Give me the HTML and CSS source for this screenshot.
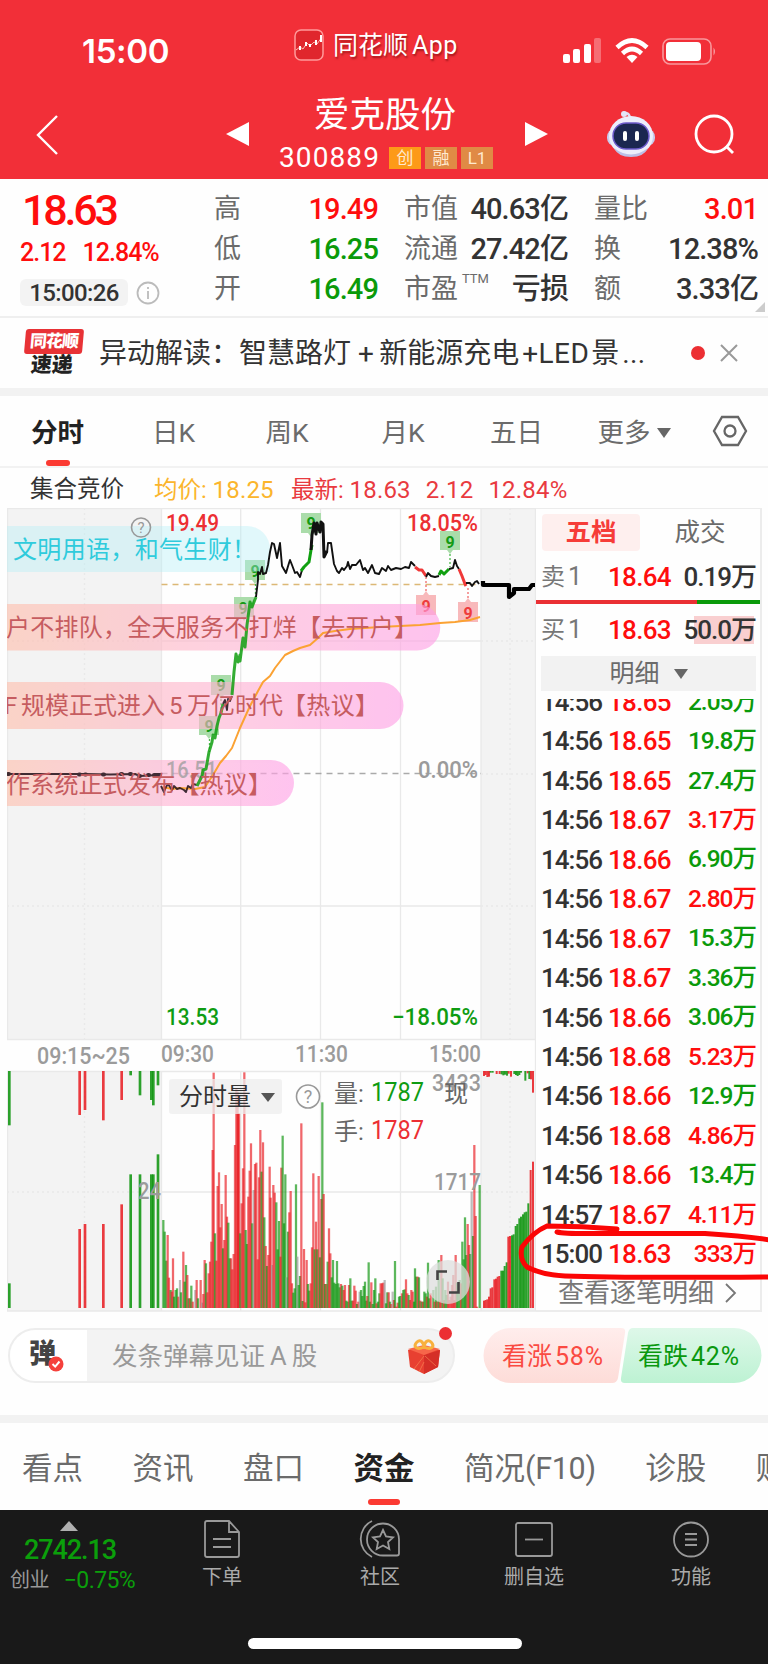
FILE: index.html
```
<!DOCTYPE html>
<html lang="zh-CN">
<head>
  <meta charset="UTF-8">
  <meta name="viewport" content="width=device-width, initial-scale=1.0">
  <title>爱克股份 300889</title>
  <link rel="stylesheet" href="styles.css">
</head>
<body>

<header class="header">
  <div class="status-bar">
    <span class="clock">15:00</span>
    <div class="app-name">
      <svg width="30" height="32" viewBox="0 0 30 32">
        <rect x="1" y="1" width="28" height="30" rx="6" fill="#e0262d" stroke="#ff9a9a" stroke-width="1.5"/>
        <path d="M2 21L6 18L9 20L13 14L16 17L20 13L23 15L28 8" fill="none" stroke="#ffb9b0" stroke-width="1"/>
        <path d="M6 17v4M12 13v4M16 15v3M22 11v5M27 6v7" stroke="#fff" stroke-width="2"/>
      </svg>
      <span>同花顺<span class="latin">App</span></span>
    </div>
    <div class="status-icons">
      <svg width="40" height="26" viewBox="0 0 40 26" fill="#fff">
        <rect x="1" y="16" width="7" height="9" rx="2"/>
        <rect x="11" y="11" width="7" height="14" rx="2"/>
        <rect x="22" y="6" width="7" height="19" rx="2"/>
        <rect x="32" y="0" width="7" height="25" rx="2" opacity=".3"/>
      </svg>
      <svg width="34" height="26" viewBox="0 0 34 26" fill="none" stroke="#fff" stroke-width="4.6">
        <path d="M2 9.500Q17 -4.500 32 9.500"/>
        <path d="M7.500 15.500Q17 6.500 26.500 15.500"/>
        <path d="M17 25L11.500 19Q17 14.500 22.500 19Z" fill="#fff" stroke="none"/>
      </svg>
      <svg width="55" height="27" viewBox="0 0 55 27">
        <rect x="1" y="1" width="48" height="25" rx="7" fill="none" stroke="#fff" stroke-opacity=".5" stroke-width="1.600"/>
        <rect x="4" y="4" width="35" height="19" rx="4" fill="#fff"/>
        <path d="M51.500 9.500q3 4 0 8z" fill="#fff" opacity=".5"/>
      </svg>
    </div>
  </div>
  <div class="nav">
    <svg class="nav-back" width="24" height="42" viewBox="0 0 24 42"><path d="M22 2L3 21L22 40" fill="none" stroke="#fff" stroke-width="2.400"/></svg>
    <svg class="nav-prev" width="24" height="26" viewBox="0 0 24 26"><path d="M23 1V25L0 13Z" fill="#fff"/></svg>
    <div class="stock">
      <h1>爱克股份</h1>
      <div class="code"><span>300889</span><i class="tag hot">创</i><i class="tag">融</i><i class="tag">L1</i></div>
    </div>
    <svg class="nav-next" width="24" height="26" viewBox="0 0 24 26"><path d="M1 1V25L24 13Z" fill="#fff"/></svg>
    <svg class="nav-bot" width="50" height="46" viewBox="0 0 50 46">
      <path d="M24 7Q23 1 17 2" fill="none" stroke="#dfe0f5" stroke-width="2.500"/>
      <circle cx="18" cy="3" r="3" fill="#e4e6f8"/>
      <rect x="1" y="18" width="48" height="17" rx="8" fill="#c9cbec"/>
      <ellipse cx="25" cy="25" rx="22" ry="20" fill="#eceefb"/>
      <path d="M8 37q17 13 34 0q-4 9-17 9t-17-9" fill="#bcbfe6"/>
      <rect x="7" y="12" width="36" height="26" rx="13" fill="#1b2750" stroke="#6b59c9" stroke-width="1.500"/>
      <rect x="17" y="20" width="4" height="10" rx="2" fill="#fff"/>
      <rect x="29" y="20" width="4" height="10" rx="2" fill="#fff"/>
    </svg>
    <svg class="nav-search" width="42" height="42" viewBox="0 0 42 42" fill="none" stroke="#fff" stroke-width="2.800"><circle cx="20" cy="20" r="18"/><path d="M32 32L39 39"/></svg>
  </div>
</header>

<section class="quote">
  <div class="quote-main">
    <div class="price">18.63</div>
    <div class="change"><span>2.12</span><span>12.84%</span></div>
    <div class="time-row">
      <span class="time-pill">15:00:26</span>
      <svg width="24" height="24" viewBox="0 0 24 24" fill="none" stroke="#bbb" stroke-width="1.800"><circle cx="12" cy="12" r="10.500"/><path d="M12 10v8M12 6v2"/></svg>
    </div>
  </div>
  <dl class="stats s1">
    <dt>高</dt><dd class="up">19.49</dd>
    <dt>低</dt><dd class="down">16.25</dd>
    <dt>开</dt><dd class="down">16.49</dd>
  </dl>
  <dl class="stats s2">
    <dt>市值</dt><dd>40.63亿</dd>
    <dt>流通</dt><dd>27.42亿</dd>
    <dt>市盈<sup>TTM</sup></dt><dd>亏损</dd>
  </dl>
  <dl class="stats s3">
    <dt>量比</dt><dd class="up">3.01</dd>
    <dt>换</dt><dd>12.38%</dd>
    <dt>额</dt><dd>3.33亿</dd>
  </dl>
  <span class="corner"></span>
</section>

<section class="news">
  <div class="news-logo"><b>同花顺</b><em>速递</em></div>
  <p>异动解读：智慧路灯<span class="plus">+</span>新能源充电<span>+LED</span>景<span>...</span></p>
  <span class="dot"></span>
  <svg width="18" height="18" viewBox="0 0 18 18"><path d="M1 1L17 17M17 1L1 17" stroke="#999" stroke-width="2"/></svg>
</section>

<nav class="tabs">
  <span class="active">分时</span>
  <span>日K</span>
  <span>周K</span>
  <span>月K</span>
  <span>五日</span>
  <span>更多<i class="caret"></i></span>
  <svg width="36" height="32" viewBox="0 0 36 32" fill="none" stroke="#666" stroke-width="2.300"><path d="M10 2H26L34 16L26 30H10L2 16Z"/><circle cx="18" cy="16" r="5.500"/></svg>
</nav>

<div class="legend">
  <span class="l-name">集合竞价</span>
  <span class="l-avg">均价: <b>18.25</b></span>
  <span class="l-new">最新: <b>18.63</b></span>
  <span class="l-new"><b>2.12</b></span>
  <span class="l-new"><b>12.84%</b></span>
</div>

<main class="board">
  <svg class="chart" width="529" height="804" viewBox="7 508 529 804">
    <defs>
      <linearGradient id="pink" x1="0" x2="1"><stop offset="0" stop-color="#ffc0ad"/><stop offset=".5" stop-color="#ffb5d0"/><stop offset="1" stop-color="#ff9fe6"/></linearGradient>
    </defs>

    <!-- auction zones and grid -->
    <path d="M7 508H161.500V1039H7ZM481 508H535.500V1039H481ZM7 1071H161.500V1311H7ZM481 1071H535.500V1311H481Z" fill="#f3f3f3"/>
    <path class="grid" d="M7 508.500H536M7 1039.500H536M7 1071.500H536M7 1311H536M161.500 641H481M161.500 906H481M161.500 1192H481M7.500 508V1039M161.500 508V1039M240.700 508V1039M320.500 508V1039M400.500 508V1039M481 508V1039M535.500 508V1311M7.500 1071V1311M161.500 1071V1311M240.700 1071V1311M320.500 1071V1311M400.500 1071V1311M481 1071V1311"/>
    <path class="grid dotted" d="M84.500 508V1039M510 508V1039M84.500 1071V1311M510 1071V1311M7 641H161M7 1192H161M481 641H535M481 774H535M481 1192H535M7 906H161M481 906H535"/>
    <path d="M161.500 584.500H478" stroke="#dcb876" stroke-width="1.300" stroke-dasharray="6 5"/>
    <path d="M161.500 773.500H481" stroke="#aaa" stroke-width="1.300" stroke-dasharray="6 5"/>

    <!-- nine-turn flags -->
    <g class="flag-buy">
      <path d="M245 560h20v20h-7l-3 4l-3-4h-7ZM234 597h20v20h-7l-3 4l-3-4h-7ZM211 675h20v20h-7l-3 4l-3-4h-7ZM199 716h20v19h-7l-3 4l-3-4h-7ZM301 513h20v20h-7l-3 4l-3-4h-7ZM440 531h20v19h-7l-3 4l-3-4h-7Z"/>
      <text x="255" y="577">9</text><text x="243" y="614">9</text><text x="221" y="691">9</text><text x="209" y="732">9</text><text x="311" y="529">9</text><text x="450" y="548">9</text>
    </g>
    <g class="flag-sell">
      <path d="M416 595h7l3-4l3 4h7v20h-20ZM458 602h7l3-4l3 4h7v20h-20Z"/>
      <text x="426" y="612">9</text><text x="468" y="619">9</text>
    </g>
    <path d="M255.500 584V597M221 699V712M209.500 739V752M450 554V567" class="stem green-line"/>
    <path d="M426 577V592M468 588V599" class="stem red-line"/>

    <!-- bullet comment bubbles -->
    <path d="M7 526H247A23 23 0 0 1 270 549V572H7Z" fill="#b4eef6" opacity=".38"/>
    <g fill="url(#pink)" opacity=".62">
      <path d="M7 604H417A23 23 0 0 1 417 650.500H7Z"/>
      <path d="M7 682H380A23 23 0 0 1 380 729H7Z"/>
      <path d="M7 760H271A23 23 0 0 1 271 806H7Z"/>
    </g>

    <text class="num gray base" x="166" y="778" textLength="51" lengthAdjust="spacingAndGlyphs">16.51</text>
    <text class="num gray" x="418" y="778" textLength="60" lengthAdjust="spacingAndGlyphs">0.00%</text>
    <text class="num red" x="166" y="531" textLength="53" lengthAdjust="spacingAndGlyphs">19.49</text>
    <text class="num red" x="407" y="531" textLength="71" lengthAdjust="spacingAndGlyphs">18.05%</text>
    <text class="num green" x="166" y="1025" textLength="53" lengthAdjust="spacingAndGlyphs">13.53</text>
    <text class="num green" x="392" y="1025" textLength="86" lengthAdjust="spacingAndGlyphs">−18.05%</text>

    <!-- average -->
    <path class="line avg" d="M163 787L172 789L180 788L195 789L205 787L213 775L220 763L226 756L232 748L240 728L250 706L258 691L263 682L270 676L275 668L285 655L293 651L300 648L310 645L318 638L323 633L335 631L350 629L380 627L420 625L440 623L455 622L470 620L480 617"/>

    <!-- price -->
    <g opacity=".85">
      <path class="line" stroke="#201018" d="M7 774H84L110 774.500L135 774L140 776L158 775L161 774"/>
      <path class="beads" d="M8 774h1M79 774.500h1M85 774.500h1M103 774.500h1M121 774h1M130 774h1M139 776h1M148 775h1M154 775h6"/>
      <path class="line" stroke="#201018" d="M161 786L164 792L166 787L168 784L172 790L174 786L177 789L180 788L184 790L186 792L188 786L191 788L193 784L197 785"/>
      <path class="line bold" stroke="#10a010" d="M197 786L200 780L202 776L203 770L206 769L209 752L212 742L213 735L215 738L217 726L219 718L221 713L223 704"/>
      <path class="line" stroke="#201018" d="M223 704L225 700L227 710L228 699L230 701L232 696"/>
      <path class="line bold" stroke="#10a010" d="M232 695L234 672L236 654L238 662L240 655L240 661L243 638L245 647L247 625L249 610L250 602L252 607L256 597"/>
    </g>
    <path class="line" stroke="#111" d="M256 597L258 580L258 572L260 574L262 567L263 574L266 573L268 565L270 552L272 543L274 544L277 558L280 543L282 566L286 573L289 563L290 560L292 565L295 573L297 572L300 577L302 570"/>
    <path class="line bold" stroke="#10a010" d="M301 571L304 567L307 564L309 562L311 550L312 545"/>
    <path class="line bold" stroke="#111" d="M311 550L312 535L314 523L316 534L317 523L320 532L321 522L323 524L324 557L327 551"/>
    <path class="line" stroke="#111" d="M327 553L328 543L331 543L333 557L334 564L337 571L339 573L342 568L344 570L347 566L348 562L350 569L352 565L356 565L360 560L363 570L365 568L368 573L372 565L375 573L379 574L382 568L386 571L388 566L391 570L396 568L401 569L405 567L409 568L411 562L415 566"/>
    <path class="line bold" stroke="#f03838" d="M415 567L419 570L422 570L426 576"/>
    <path class="line" stroke="#111" d="M426 577L428 573L431 576L435 577L439 576"/>
    <path class="line bold" stroke="#10a010" d="M439 575L441 571L444 574L449 569"/>
    <path class="line" stroke="#111" d="M449 569L453 568L455 560L457 566L459 569"/>
    <path class="line bold" stroke="#f03838" d="M459 569L462 576L465 584L466 586"/>
    <path class="line" stroke="#111" d="M466 583L470 583L472 586L475 582L477 581L479 584"/>
    <path class="close-line" d="M483 581V585H509V597L514 593V589H529L532 585H535"/>

    <!-- bullet comment text -->
    <text class="cn" x="13" y="558" fill="#2fcbdc" textLength="243">文明用语，和气生财！</text>
    <g class="cn" fill="#c65c60">
      <text x="6" y="636" textLength="412">户不排队，全天服务不打烊【去开户】</text>
      <text x="4" y="714">F<tspan x="21" textLength="144">规模正式进入</tspan><tspan x="169">5</tspan><tspan x="187" textLength="96">万亿时代</tspan><tspan x="282" textLength="97">【热议】</tspan></text>
      <text x="6" y="793" textLength="266">作系统正式发布【热议】</text>
    </g>

    <text class="num gray" x="37" y="1064" textLength="93" lengthAdjust="spacingAndGlyphs">09:15~25</text>
    <text class="num gray" x="161" y="1062" textLength="53" lengthAdjust="spacingAndGlyphs">09:30</text>
    <text class="num gray" x="295" y="1062" textLength="53" lengthAdjust="spacingAndGlyphs">11:30</text>
    <text class="num gray" x="429" y="1062" textLength="52" lengthAdjust="spacingAndGlyphs">15:00</text>

    <!-- volume, drawn in thirds of a pixel -->
    <g class="vol" id="vol"></g>

    <text class="num gray" x="138" y="1199" font-size="20" textLength="23" lengthAdjust="spacingAndGlyphs">24</text>
    <text class="num gray" x="432" y="1091" textLength="49" lengthAdjust="spacingAndGlyphs">3433</text>
    <text class="num gray" x="434" y="1190" textLength="47" lengthAdjust="spacingAndGlyphs">1717</text>

    <rect x="169" y="1079" width="113" height="35" rx="3" fill="#eee" opacity=".75"/>
    <text class="cn" x="179" y="1105" fill="#333">分时量</text>
    <path d="M261 1093h14l-7 9z" fill="#555"/>
    <text class="cn" x="334" y="1102" fill="#666">量:</text>
    <text class="cn" x="334" y="1140" fill="#666">手:</text>
    <text class="cn" x="444" y="1102" fill="#666">现</text>
    <text class="big green" x="371" y="1101" textLength="53" lengthAdjust="spacingAndGlyphs">1787</text>
    <text class="big red" x="371" y="1139" textLength="53" lengthAdjust="spacingAndGlyphs">1787</text>

    <g class="help">
      <circle cx="141" cy="527.500" r="9.500"/><text x="141" y="533" font-size="15">?</text>
      <circle cx="308" cy="1096.500" r="11.500"/><text x="308" y="1103" font-size="18">?</text>
    </g>

    <circle cx="448" cy="1282" r="22" fill="#ddd" opacity=".75"/>
    <path d="M437.500 1280V1271.500H447M449 1292.500H458.500V1282" fill="none" stroke="#444" stroke-width="2.600"/>
  </svg>

  <aside class="depth">
    <div class="depth-tabs"><span class="active">五档</span><span>成交</span></div>
    <div class="level"><span>卖<small>1</small></span><b>18.64</b><em>0.19万</em></div>
    <div class="ratio"></div>
    <div class="level buy"><span>买<small>1</small></span><b>18.63</b><em>50.0万</em></div>
    <div class="detail-head">明细<i class="caret"></i></div>
    <div class="ticks">
      <div class="tick"><span>14:56</span><b>18.65</b><em class="down">2.05万</em></div>
      <div class="tick"><span>14:56</span><b>18.65</b><em class="down">19.8万</em></div>
      <div class="tick"><span>14:56</span><b>18.65</b><em class="down">27.4万</em></div>
      <div class="tick"><span>14:56</span><b>18.67</b><em class="up">3.17万</em></div>
      <div class="tick"><span>14:56</span><b>18.66</b><em class="down">6.90万</em></div>
      <div class="tick"><span>14:56</span><b>18.67</b><em class="up">2.80万</em></div>
      <div class="tick"><span>14:56</span><b>18.67</b><em class="down">15.3万</em></div>
      <div class="tick"><span>14:56</span><b>18.67</b><em class="down">3.36万</em></div>
      <div class="tick"><span>14:56</span><b>18.66</b><em class="down">3.06万</em></div>
      <div class="tick"><span>14:56</span><b>18.68</b><em class="up">5.23万</em></div>
      <div class="tick"><span>14:56</span><b>18.66</b><em class="down">12.9万</em></div>
      <div class="tick"><span>14:56</span><b>18.68</b><em class="up">4.86万</em></div>
      <div class="tick"><span>14:56</span><b>18.66</b><em class="down">13.4万</em></div>
      <div class="tick"><span>14:57</span><b>18.67</b><em class="up">4.11万</em></div>
      <div class="tick"><span>15:00</span><b>18.63</b><em class="up">333万</em></div>
    </div>
    <div class="more">查看逐笔明细<svg width="12" height="20" viewBox="0 0 12 20"><path d="M1 1L10 10L1 19" fill="none" stroke="#777" stroke-width="1.800"/></svg></div>
  </aside>

  <!-- hand-drawn marker around the last trade -->
  <svg class="marker" width="252" height="60" viewBox="516 1222 252 60">
    <path d="M617 1229Q582 1226 547 1226Q533 1232 522 1247Q519 1259 527 1267Q542 1275 565 1276Q615 1278 770 1277M557 1232Q565 1234 600 1233.500H705Q745 1236 770 1240"/>
  </svg>
</main>

<section class="social">
  <div class="danmu">
    <div class="danmu-icon">弹
      <svg width="16" height="16" viewBox="0 0 16 16"><circle cx="8" cy="8" r="7.500" fill="#f5413c"/><path d="M4.500 8L7.200 10.600L11.500 5.500" fill="none" stroke="#fff" stroke-width="2"/></svg>
    </div>
    <span class="placeholder">发条弹幕见证<i>A</i>股</span>
    <svg class="gift" width="34" height="36" viewBox="0 0 34 36">
      <path d="M1 12L17 8L33 12L31 29L17 36L3 29Z" fill="#e84031"/>
      <path d="M17 17L33 12L31 29L17 36Z" fill="#d52f27"/>
      <path d="M1 11L17 7L33 11L17 17Z" fill="#f7664a"/>
      <path d="M17 18L7 31M17 24L12 34M18 18L29 28" stroke="#f68254" stroke-width="1" opacity=".7"/>
      <path d="M17 9C9 13 6 8 10 4S17 6 17 9C17 6 20 0 24 4S25 13 17 9" fill="none" stroke="#f8b13e" stroke-width="3"/>
    </svg>
    <span class="dot"></span>
  </div>
  <div class="vote">
    <svg width="279" height="56" viewBox="0 0 279 56">
      <defs>
        <linearGradient id="bull" x2="0" y2="1"><stop offset="0" stop-color="#ffedec"/><stop offset="1" stop-color="#fddcd8"/></linearGradient>
        <linearGradient id="bear" x2="0" y2="1"><stop offset="0" stop-color="#def8e9"/><stop offset="1" stop-color="#bdf2d3"/></linearGradient>
      </defs>
      <path d="M28 0H138Q143 0 142 5L135 50Q134 55 129 55H28A27.500 27.500 0 0 1 28 0Z" fill="url(#bull)"/>
      <path d="M251 0H150Q146 0 145 5L138 50Q137 55 142 55H251A27.500 27.500 0 0 0 251 0Z" fill="url(#bear)"/>
    </svg>
    <span class="bull">看涨<i>58%</i></span>
    <span class="bear">看跌<i>42%</i></span>
  </div>
</section>

<nav class="sub-tabs">
  <span>看点</span>
  <span>资讯</span>
  <span>盘口</span>
  <span class="active">资金</span>
  <span>简况<i>(F10)</i></span>
  <span>诊股</span>
  <span>财务</span>
</nav>

<footer class="toolbar">
  <div class="index">
    <i class="tri"></i>
    <b>2742.13</b>
    <div><span>创业</span><em>−0.75%</em></div>
  </div>
  <div class="tool">
    <svg width="42" height="38" viewBox="0 0 42 38"><path d="M6 1H28L38 12V35Q38 37 36 37H6Q4 37 4 35V3Q4 1 6 1ZM28 1V12H38M12 19H30M12 27H30"/></svg>
    下单
  </div>
  <div class="tool">
    <svg width="42" height="38" viewBox="0 0 42 38"><path d="M24 3.500A16 16 0 1 0 24 35.500H38Q40 35.500 40 33.500V19.500A16 16 0 0 0 24 3.500ZM24 10L27 16.500L34 17.300L29 22L30.300 29L24 25.500L17.700 29L19 22L14 17.300L21 16.500ZM13 1A20 20 0 0 0 13 37"/></svg>
    社区
  </div>
  <div class="tool">
    <svg width="42" height="38" viewBox="0 0 42 38"><rect x="3" y="3" width="36" height="33" rx="2"/><path d="M12 19.500H30"/></svg>
    删自选
  </div>
  <div class="tool last">
    <svg width="42" height="38" viewBox="0 0 42 38"><circle cx="21" cy="19.500" r="17"/><path d="M15 14H27M15 19.500H27M15 25H27"/></svg>
    功能
  </div>
  <div class="home-bar"></div>
</footer>

<script>
// x, side (r = up, g = down, k = flat), top - left half of the session
var morning = '490g720 494g755 499g842 503r765 507r893 512g930 515r935 519r835 522g950 527g930 531g925 535r950 540k900 543g937 550r815 554g905 558g855 562r885 566g955 570r955 574g917 578r965 586k930 590r900 594g955 602r900 606k968 610r942 614r840 618g850 622r937 626r880 630r845 634r785 638r510 641r278 645g760 649r842 653r618 657r577 661r742 665r672 669g805 673r780 677r585 681r710 685g728 689g835 693r835 697r868 701r822 705r495 709r325 713r335 714r400 717r400 721g760 725r670 729r565 733r277 737g750 741g792 745r650 749r572 753r490 757g730 761k630 765r552 769r548 773r838 777r592 781r450 785g575 789r487 793g712 797r798 801g858 805r825 809r560';
// right half of the session
var afternoon = '62r593 66k795 70r555 74r578 79g607 83g748 87g663 91r770 94r503 98g407 102g670 106g523 110k832 114g695 118r637 122r573 126r850 130g878 134g865 138g553 142k770 146g855 150g828 154r370 158g903 162r747 166r907 170r780 174g852 178g872 182r850 186r742 190r520 194g748 198r665 202g748 206r528 210g772 214r597 217g307 221r582 225g852 229r852 233g785 237r685 241r760 245g832 249g780 253g848 257g852 261g783 265g850 269g862 273r852 277g857 281r870 285r855 289g902 293g905 297r855 301g835 305g902 309r902 313r857 317r872 321g912 325r905 329k875 333g870 337g888 341g858 345g845 349g902 352r888 356g787 360g905 364r847 368g912 372g870 376g835 380r910 384g905 388g880 392r850 396r850 400r848 404k840 408g910 412g877 416r877 420g905 424r912 428k875 432r900 435g783 439r920 443r908 447g890 451g888 456r880 460g870 464g868 468r838 472r880 476g885 480r900 484r870 488r875 492g905 495g805 499g830 503r830 507g832 511r902 515g905 519r905 523g875 527g880 531r890 534g788 538g895 542r880 550g870 554r905 558g860 562r905 566g780 570r902 574r765 578g835 582r900 586g870 590g885 594r845 598r900 602r890 606r855 610r825 613r900 617r765 621g848 625g880 629g840 633r850 637g725 641g778 645g652 649g765 653r672 657r735 661g762 665k575 669g708 673r435 677r648 681r920 689g555';
var closing = '702r902 707r900 712r898 717r890 722r865 727r862 733r838 738r836 743r830 748r828 754g812 759g812 764g798 770g787 775r710 780r708 786g706 791g703 797g678 802g672 808g655 813g650 819g643 824g637 829g635 835g610 842r510 849r485';
var auction = '28g910 239r747 255r732 310r732 365r673 392g583 420g583 454g583 460g583 474g523';
var auctionTop = '28g436 239r405 255r390 310r421 365r360 392g286 420g346 454g360 460g376 474g316';
var closingTop = '702r228 707r225 712r231 717r230 722g218 728g218 740r222 749r222 755g223 760g226 765g224 771g227 776r221 783r230 793g222 798g225 803g228 808g225 813g218 826g242 833r220 838g237 843r238 849r278';

var colors = { r: '#e8191f', g: '#089208', k: '#999' };

function drawBars(data, left, top, base, width, opacity) {
  var bars = data.split(' ').map(function (bar) {
    var m = bar.match(/(\d+)([rgk])(\d+)/);
    return '<path stroke="' + colors[m[2]] + '" d="M' + m[1] + ' ' + base + 'V' + m[3] + '"/>';
  });
  return '<g transform="translate(' + left + ' ' + top + ') scale(.33333)" stroke-width="' + width + '" stroke-opacity="' + opacity + '">' + bars.join('') + '</g>';
}

document.getElementById('vol').innerHTML =
  drawBars(morning, 0, 980, 984, 6.8, 0.66) +
  drawBars(afternoon, 250, 1000, 924, 6.8, 0.66) +
  drawBars(closing, 250, 1000, 924, 6, 0.85) +
  drawBars(closingTop, 250, 1000, 213, 6, 0.85) +
  drawBars(auction, 0, 980, 984, 8, 0.85) +
  drawBars(auctionTop, 0, 980, 273, 8, 0.85);
</script>

</body>
</html>
```
FILE: styles.css
```
:root {
  --red: #ff0d0d;
  --green: #0a9a0a;
  --brand: #f22f38;
  --text: #333;
  --muted: #6b6b6b;
  --line: #ececec;
}

* {
  box-sizing: border-box;
}

body {
  margin: 0;
  width: 768px;
  height: 1664px;
  overflow: hidden;
  background: #fefefe;
  color: var(--text);
  font-family: Roboto, "Noto Sans CJK SC", sans-serif;
  line-height: 1;
}

svg {
  display: block;
  flex: none;
}

i, em {
  font-style: normal;
}

.up { color: var(--red); }
.down { color: var(--green); }

.caret {
  border: 7px solid transparent;
  border-top: 10px solid #666;
  border-bottom: 0;
}

.dot {
  width: 14px;
  height: 14px;
  border-radius: 50%;
  background: #ec2f33;
}

/* header */
.header {
  height: 179px;
  background: var(--brand);
  color: #fff;
}

.status-bar {
  height: 90px;
  display: grid;
  grid-template-columns: 294px 268px 1fr;
}

.clock {
  padding: 35px 0 0 82px;
  font: 600 33px/1 Inter, sans-serif;
  letter-spacing: -0.3px;
}

.app-name {
  display: flex;
  align-items: center;
  height: 32px;
  margin-top: 29px;
  gap: 9px;
  font-size: 25px;
  text-shadow: 1px 2px 2px rgba(90, 0, 0, 0.5);
}

.app-name .latin {
  margin-left: 4px;
  letter-spacing: 0.5px;
}

.status-icons {
  display: flex;
  gap: 13px;
  padding-top: 38px;
}

.nav {
  display: grid;
  grid-template-columns: 226px 25px 268px 87px 88px 1fr;
  height: 89px;
}

.nav-back { margin: 24px 0 0 35px; }
.nav-prev, .nav-next { margin-top: 31px; }
.nav-next { margin-left: 5px; }
.nav-bot { margin-top: 21px; }
.nav-search { margin-top: 24px; }

.stock {
  display: flex;
  flex-direction: column;
  align-items: center;
  padding-top: 6px;
}

.stock h1 {
  margin: 0;
  font-size: 35.500px;
  font-weight: 400;
  line-height: 38px;
}

.code {
  display: flex;
  align-items: center;
  gap: 4px;
  margin: 11px 0 0 2px;
  font-size: 28px;
  letter-spacing: 1.1px;
  line-height: 26px;
}

.code span { margin-right: 5px; }

.tag {
  width: 32px;
  height: 22px;
  background: #e08a45;
  color: #ffe9cf;
  font-size: 17px;
  line-height: 22px;
  letter-spacing: 0;
  text-align: center;
}

.tag.hot {
  background: #fd9a18;
}

/* quote */
.quote {
  position: relative;
  display: grid;
  grid-template-columns: 194px 164px 190px 190px;
  height: 139px;
  padding: 10px 0 0 20px;
  border-bottom: 2px solid #efefef;
}

.quote-main {
  color: var(--red);
  font-weight: 500;
}

.price {
  padding-left: 2px;
  font-size: 43px;
  line-height: 42px;
  letter-spacing: -3.200px;
}

.change {
  display: flex;
  gap: 17px;
  margin-top: 8px;
  font-size: 25px;
  line-height: 28px;
  letter-spacing: -1px;
}

.time-row {
  display: flex;
  align-items: center;
  gap: 8px;
  margin-top: 12px;
}

.time-pill {
  width: 108px;
  height: 27px;
  border-radius: 6px;
  background: #f3f3f3;
  color: var(--text);
  font-size: 24px;
  line-height: 28px;
  letter-spacing: -0.600px;
  text-align: center;
}

.stats {
  display: grid;
  grid-template-columns: auto 1fr;
  grid-auto-rows: 40px;
  align-items: center;
  margin: 0;
  font-size: 29px;
}

.s2 { margin-left: 26px; }
.s3 { margin-left: 26px; }

.stats dt {
  position: relative;
  color: var(--muted);
  font-size: 27px;
  white-space: nowrap;
}

.stats dd {
  margin: 0;
  font-weight: 500;
  text-align: right;
  letter-spacing: -0.900px;
  white-space: nowrap;
}

.stats sup {
  position: absolute;
  left: 58px;
  top: -4px;
  font-size: 13px;
  line-height: 1;
}

.corner {
  position: absolute;
  right: 3px;
  bottom: 4px;
  border: 5px solid #ccc;
  border-top-color: transparent;
  border-left-color: transparent;
}

/* news strip */
.news {
  display: flex;
  align-items: center;
  height: 70px;
  padding-left: 24px;
}

.news-logo {
  width: 58px;
  height: 48px;
  text-align: center;
  transform: skewX(-5deg);
}

.news-logo b {
  display: block;
  height: 25px;
  border-radius: 3px;
  background: #e83236;
  color: #fff;
  font-size: 17px;
  font-weight: 900;
  line-height: 24px;
  letter-spacing: -1px;
}

.news-logo em {
  display: block;
  color: #222;
  font-size: 21px;
  font-weight: 900;
  line-height: 23px;
}

.news p {
  width: 549px;
  margin: 1px 43px 0 17px;
  font-size: 28px;
  white-space: nowrap;
}

.news p span {
  margin: 0 2px 0 3px;
  letter-spacing: 0.4px;
}

.news p .plus {
  margin: 0 5px 0 7px;
}

.news .dot {
  margin-right: 15px;
}

/* period tabs */
.tabs {
  display: grid;
  grid-template-columns: 115px 117px 110px 122px 105px 130px 61px;
  justify-items: center;
  align-items: center;
  height: 80px;
  border-top: 8px solid #f2f2f2;
  border-bottom: 2px solid #f2f2f2;
  color: var(--muted);
  font-size: 26.500px;
}

.tabs span {
  display: flex;
  align-items: center;
  height: 70px;
  padding-top: 4px;
}

.tabs .active {
  position: relative;
  color: #222;
  font-weight: 700;
}

.tabs .active::after,
.sub-tabs .active::after {
  content: "";
  position: absolute;
  left: 50%;
  bottom: 0;
  width: 24px;
  height: 6px;
  margin-left: -12px;
  border-radius: 3px;
  background: #fb3a32;
}

.tabs .caret {
  margin-left: 6px;
}

.legend {
  display: flex;
  align-items: center;
  height: 40px;
  padding: 4px 0 0 30px;
  font-size: 23.500px;
}

.legend b {
  font-size: 24px;
  font-weight: 400;
  letter-spacing: 0.200px;
}

.l-name { width: 124px; }
.l-avg { width: 137px; color: #fbb52c; }
.l-new { margin-right: 15px; color: #e93a40; }

/* chart and order book */
.board {
  position: relative;
  display: flex;
  height: 804px;
  padding-left: 7px;
}

.grid {
  fill: none;
  stroke: #e9e9e9;
  stroke-width: 1.300;
}

.dotted { stroke-dasharray: 2 3; }

.line {
  fill: none;
  stroke-width: 1.900;
  stroke-linejoin: round;
}

.line.bold { stroke-width: 3; }

.line.avg {
  stroke: #fba233;
  stroke-width: 2;
}

.beads {
  fill: none;
  stroke: #201018;
  stroke-width: 4;
  stroke-linecap: round;
}

.close-line {
  fill: none;
  stroke: #000;
  stroke-width: 4.200;
  stroke-linejoin: round;
}

.stem {
  stroke-width: 1.300;
  stroke-dasharray: 2 2;
}

.green-line { stroke: #4cb84c; }
.red-line { stroke: #f06a6a; }

.flag-buy path { fill: #aadcaa; }
.flag-buy text { fill: #149a14; }
.flag-sell path { fill: #f8b9bb; }
.flag-sell text { fill: #ee3c3c; }

.flag-buy text,
.flag-sell text {
  font-size: 16px;
  font-weight: 700;
  text-anchor: middle;
}

.num {
  font-size: 23px;
  font-weight: 500;
}

.num.gray {
  fill: #9b9b9b;
}

.num.base {
  opacity: 0.75;
}

.big { font-size: 25px; }
.red { fill: #ec2f33; }
.green { fill: #0f9c12; }

.cn {
  font-size: 24px;
}

.help circle {
  fill: none;
  stroke: #999;
  stroke-width: 1.600;
}

.help text {
  fill: #999;
  text-anchor: middle;
}

.depth {
  width: 226px;
  border-top: 1px solid var(--line);
  border-right: 2px solid var(--line);
  border-bottom: 2px solid var(--line);
}

.depth-tabs {
  display: flex;
  padding: 5px 0 0 6px;
  color: var(--muted);
  font-size: 25.500px;
  line-height: 37px;
  text-align: center;
}

.depth-tabs span {
  width: 102px;
  height: 37px;
  margin-right: 11px;
}

.depth-tabs .active {
  border-radius: 4px;
  background: #feefee;
  color: #f63c38;
  font-weight: 700;
}

.level,
.tick {
  display: grid;
  grid-template-columns: 67px 66px 1fr;
  align-items: center;
  padding: 0 4px 0 5px;
  font-size: 26px;
  font-weight: 500;
  letter-spacing: -1px;
  white-space: nowrap;
}

.level {
  height: 49px;
  padding-top: 2px;
}

.level span {
  color: #777;
  font-size: 24px;
  font-weight: 400;
}

.level small {
  margin-left: 4px;
  font-size: 25px;
}

.level b,
.tick b {
  color: var(--red);
  font-weight: 500;
  letter-spacing: -0.700px;
}

.level em,
.tick em {
  text-align: right;
  font-size: 24.500px;
}

.level em {
  font-size: 26px;
}

.buy em {
  background: linear-gradient(#f9cfd0, #f9cfd0) right 2px center / 60px 28px no-repeat;
  line-height: 28px;
}

.ratio {
  height: 4px;
  background: linear-gradient(90deg, #ea3034 161px, #0a9a0a 161px);
}

.detail-head {
  display: flex;
  align-items: center;
  justify-content: center;
  gap: 14px;
  height: 35px;
  margin: 3px 4px 8px 5px;
  background: #f2f2f2;
  color: var(--muted);
  font-size: 25px;
}

.ticks {
  display: flex;
  flex-direction: column;
  justify-content: flex-end;
  height: 575px;
  overflow: hidden;
}

.tick {
  flex: none;
  height: 39.460px;
}

.more {
  display: flex;
  align-items: center;
  gap: 11px;
  height: 37px;
  padding-left: 22px;
  color: #777;
  font-size: 26px;
}

.marker {
  position: absolute;
  left: 516px;
  top: 714px;
  fill: none;
  stroke: #fb0505;
  stroke-width: 5;
  stroke-linecap: round;
}

/* bullet comment input and poll */
.social {
  display: flex;
  gap: 28px;
  height: 111px;
  padding: 16px 0 0 8px;
  border-bottom: 8px solid #f2f2f2;
}

.danmu {
  position: relative;
  display: flex;
  align-items: center;
  width: 447px;
  height: 55px;
  border: 2px solid #ededed;
  border-radius: 28px;
  background: #f3f3f3;
}

.danmu-icon {
  position: relative;
  width: 77px;
  height: 51px;
  padding-left: 19px;
  border-radius: 26px 0 0 26px;
  background: #fff;
  color: #444;
  font-size: 27px;
  font-weight: 900;
  line-height: 49px;
}

.danmu-icon svg {
  position: absolute;
  left: 38px;
  top: 26px;
}

.placeholder {
  width: 320px;
  padding: 2px 0 0 25px;
  color: #999;
  font-size: 25.500px;
}

.placeholder i {
  margin: 0 5px;
}

.gift {
  position: absolute;
  right: 12px;
  top: 8px;
}

.danmu .dot {
  position: absolute;
  right: 1px;
  top: -3px;
  width: 13px;
  height: 13px;
}

.vote {
  position: relative;
}

.vote span {
  position: absolute;
  top: 16px;
  font-size: 25px;
  white-space: nowrap;
}

.vote i {
  margin-left: 3px;
  letter-spacing: 0.8px;
}

.bull { left: 19px; color: #fa4a42; }
.bear { left: 155px; color: #0a980f; }

/* section tabs */
.sub-tabs {
  display: flex;
  gap: 49.500px;
  height: 87px;
  padding: 30px 0 0 22px;
  overflow: hidden;
  color: var(--muted);
  font-size: 30.500px;
  line-height: 32px;
  white-space: nowrap;
}

.sub-tabs i {
  letter-spacing: -0.300px;
}

.sub-tabs .active {
  position: relative;
  color: #222;
  font-weight: 700;
}

.sub-tabs .active::after {
  bottom: 5px;
  width: 32px;
  margin-left: -16px;
}

/* bottom toolbar */
.toolbar {
  position: relative;
  display: grid;
  grid-template-columns: 143px 158px 158px 150px 159px;
  height: 154px;
  background: #191919;
  color: #aaa;
}

.index {
  padding: 11px 0 0 10px;
  color: #0b9f0b;
}

.tri {
  display: block;
  width: 18px;
  margin-left: 50px;
  border: 9px solid transparent;
  border-top: 0;
  border-bottom: 10px solid #b0b0b0;
}

.index b {
  display: block;
  margin: 5px 0 5px 14px;
  font-size: 27px;
  font-weight: 500;
  line-height: 28px;
  letter-spacing: -1.100px;
}

.index div {
  display: flex;
  gap: 15px;
  align-items: center;
  height: 22px;
  font-size: 23px;
  letter-spacing: -0.600px;
}

.index span {
  color: #999;
  font-size: 20px;
}

.tool {
  display: flex;
  flex-direction: column;
  align-items: center;
  gap: 9px;
  padding-top: 10px;
  font-size: 20px;
}

.tool svg {
  fill: none;
  stroke: #999;
  stroke-width: 1.800;
}

.tool.last {
  padding-left: 5px;
}

.home-bar {
  position: absolute;
  left: 248px;
  bottom: 15px;
  width: 274px;
  height: 11px;
  border-radius: 6px;
  background: #fff;
}
```
